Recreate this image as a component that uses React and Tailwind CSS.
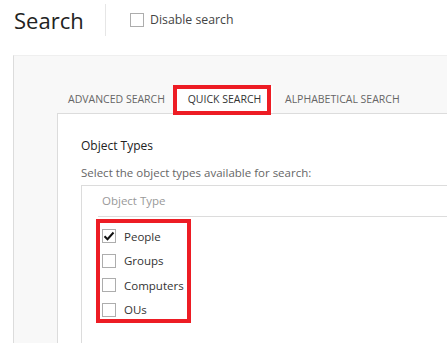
const rows = [
  { label: 'People', checked: true },
  { label: 'Groups', checked: false },
  { label: 'Computers', checked: false },
  { label: 'OUs', checked: false },
]

function Box({ checked }) {
  return (
    <span className="w-[14px] h-[14px] border border-[#adadad] bg-white flex items-center justify-center shrink-0">
      {checked && (
        <svg width="12" height="12" viewBox="0 0 12 12">
          <path d="M1.5 6.2 L4.5 9.2 L10.5 2.5" fill="none" stroke="#111" strokeWidth="2" />
        </svg>
      )}
    </span>
  )
}

export default function App() {
  return (
    <div className="w-[447px] h-[343px] overflow-hidden bg-white flex flex-col font-['Open_Sans',sans-serif]">
      {/* Header */}
      <div className="h-[40px] flex items-center shrink-0">
        <div className="w-[105px] pl-[14px] text-[22px] text-[#222] leading-none pb-[1px]">Search</div>
        <div className="w-px h-[32px] bg-[#e6e6e6]" />
        <label className="flex items-center ml-[24px] gap-[6px] text-[12.3px] text-[#444]">
          <Box checked={false} />
          Disable search
        </label>
      </div>

      {/* Panel */}
      <div className="mt-[15px] ml-[13px] flex-1 flex flex-col bg-[#f8f8f8] border-l border-t border-l-[#dcdcdc] border-t-[#efefef] pl-[43px] pt-[30px]">
        {/* Tabs */}
        <div className="flex h-[27px] text-[10.5px] uppercase">
          <div className="w-[119px] flex items-center justify-center text-[#666]">Advanced Search</div>
          <div className="relative w-[97px] flex items-center justify-center bg-white text-[#333]">
            Quick Search
            <span className="absolute left-[-3px] top-[-1px] right-[2px] bottom-[-2px] border-4 border-[#ed1c24]" />
          </div>
          <div className="flex items-center pl-[12px] text-[#666] whitespace-nowrap">Alphabetical Search</div>
        </div>

        {/* Content */}
        <div className="flex-1 bg-white border-l border-t border-[#dcdcdc] pl-[23px] pt-[24px]">
          <div className="text-[12px] leading-[16px] text-[#222]">Object Types</div>
          <div className="mt-[11px] text-[11.5px] leading-[16px] text-[#666] whitespace-nowrap">Select the object types available for search:</div>
          <div className="mt-[4px] h-[200px] border-l border-t border-[#dcdcdc]">
            <div className="ml-[16px] h-[31px] border-b border-[#dcdcdc] pl-[4px] flex items-center text-[11.5px] text-[#999]">
              Object Type
            </div>
            <div className="relative ml-[16px] pl-[4px] pt-[7px]">
              {rows.map((r) => (
                <div key={r.label} className="h-[24.5px] flex items-center gap-[8px] text-[11.5px] text-[#333]">
                  <Box checked={r.checked} />
                  {r.label}
                </div>
              ))}
              <span className="absolute left-[-2px] top-[2px] w-[95px] h-[104px] border-4 border-[#ed1c24]" />
            </div>
          </div>
        </div>
      </div>
    </div>
  )
}
